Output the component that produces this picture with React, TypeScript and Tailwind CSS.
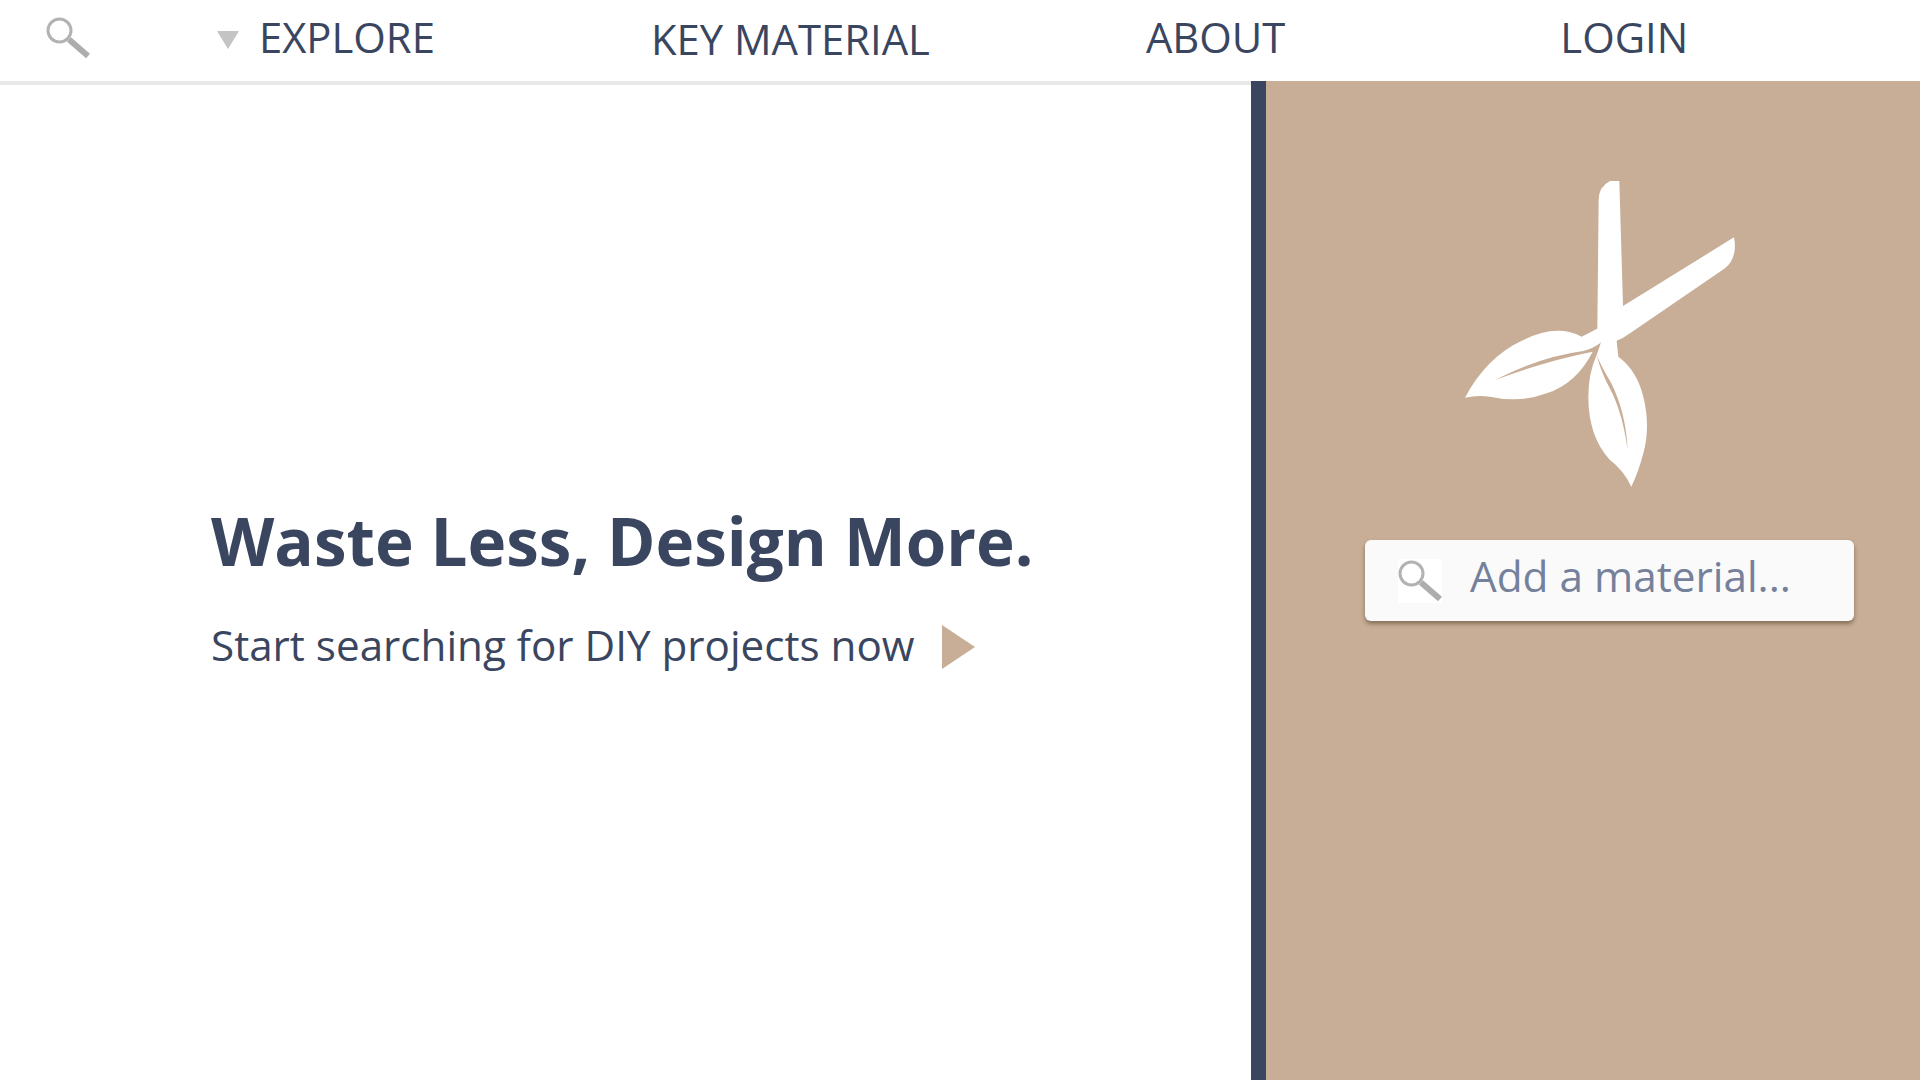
function SearchIcon({ className }: { className?: string }) {
  return (
    <svg viewBox="0 0 44 42" className={className}>
      <circle cx="13.5" cy="13.5" r="11.5" fill="none" stroke="#b2b2b2" strokeWidth="3" />
      <path d="M23 22.5 L42 39" stroke="#adadad" strokeWidth="6" fill="none" />
    </svg>
  );
}

function Logo() {
  return (
    <svg viewBox="0 0 900 990" className="w-[300px] h-[330px] block">
      <path
        fill="#fff"
        d="M510 33 L538 33 L549 408 L882 202 Q886 222 884 240 Q880 275 855 295 L570 490 Q550 505 530 512 L535 560 Q590 600 610 680 Q632 770 610 850 Q596 905 574 950 Q550 900 510 870 Q445 800 445 680 Q445 610 470 555 L482 520 L472 475 L476 90 Q476 50 510 33 Z"
      />
      <path
        fill="#fff"
        d="M75 683 Q140 560 250 510 Q350 460 425 500 L480 472 L482 518 Q460 535 430 543 Q300 560 165 630 Q320 572 458 545 Q410 640 320 670 Q240 700 150 680 Q110 675 75 683 Z"
      />
      <path
        fill="#c8ae97"
        d="M470 555 Q484 590 514 640 Q558 730 563 840 Q548 730 512 660 Q482 605 470 555 Z"
      />
    </svg>
  );
}

export default function App() {
  return (
    <div className="w-[1920px] h-[1080px] overflow-hidden bg-white flex flex-col font-['Open_Sans',sans-serif] text-[#3a4660]">
      <nav className="h-[81px] flex items-center text-[41.8px] leading-none">
        <SearchIcon className="w-[44px] h-[42px] ml-[46px] mb-[6px]" />
        <svg viewBox="0 0 22 18" className="w-[22px] h-[18px] ml-[127px] mb-[2px]">
          <path d="M0 0 H22 L11 18 Z" fill="#c4c4c4" />
        </svg>
        <span className="ml-[20px] mb-[8px]">EXPLORE</span>
        <span className="ml-[216px] mb-[4px]">KEY MATERIAL</span>
        <span className="ml-[216px] mb-[8px]">ABOUT</span>
        <span className="ml-[275px] mb-[8px]">LOGIN</span>
      </nav>
      <main className="flex-1 flex">
        <section className="w-[1251px] border-t-4 border-[#e8e8e8] pl-[211px] pt-[412px]">
          <h1 className="text-[65.5px] leading-[88px] font-bold">Waste Less, Design More.</h1>
          <div className="flex items-center mt-[32px]">
            <p className="text-[42.2px] leading-[56px]">Start searching for DIY projects now</p>
            <svg viewBox="0 0 33 44" className="w-[33px] h-[44px] ml-[27px] mt-[4px]">
              <path d="M0 0 L33 22 L0 44 Z" fill="#c8ae97" />
            </svg>
          </div>
        </section>
        <aside className="flex-1 bg-[#c8ae97] border-l-[15px] border-[#3a4660] pt-[89px]">
          <div className="ml-[174px]">
            <Logo />
          </div>
          <div className="ml-[99px] mt-[40px] w-[489px] h-[81px] bg-[#fafafa] rounded-[6px] shadow-[0_3px_4px_rgba(80,60,40,0.55)] flex items-center">
            <div className="ml-[33px] w-[44px] h-[44px] bg-white flex items-center justify-center">
              <SearchIcon className="w-[44px] h-[42px]" />
            </div>
            <span className="ml-[28px] text-[42.3px] leading-none text-[#75809a] mb-[9px]">Add a material...</span>
          </div>
        </aside>
      </main>
    </div>
  );
}
